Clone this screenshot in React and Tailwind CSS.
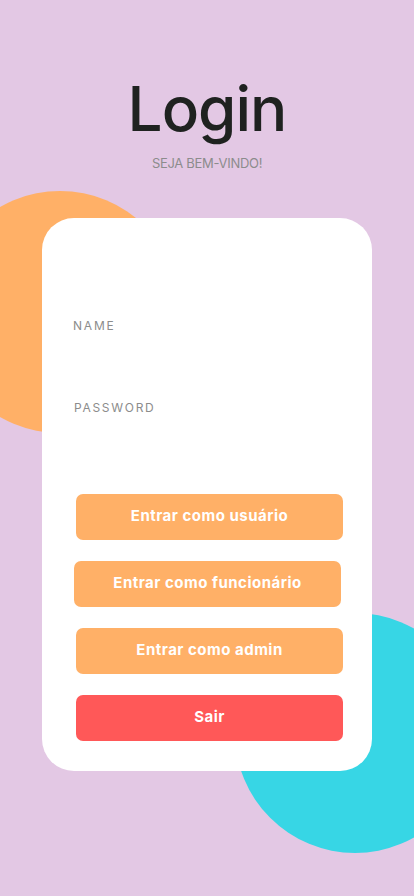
import { useState } from 'react';

const buttons = [
    { label: 'Entrar como usuário', cls: 'ml-[34px] mr-[29px] bg-[#ffb067]' },
    { label: 'Entrar como funcionário', cls: 'ml-[32px] mr-[31px] bg-[#ffb067]' },
    { label: 'Entrar como admin', cls: 'ml-[34px] mr-[29px] bg-[#ffb067]' },
    { label: 'Sair', cls: 'ml-[34px] mr-[29px] bg-[#ff5858]' },
];

const App = () => {
    const [name, setName] = useState('');
    const [password, setPassword] = useState('');

    return (
        <div className="relative min-h-[896px] w-full overflow-hidden bg-[#e3c8e4] font-['Inter',sans-serif]">
            {/* decorative circles */}
            <div className="absolute left-[-61px] top-[191px] h-[242px] w-[242px] rounded-full bg-[#ffb067]"></div>
            <div className="absolute left-[235px] top-[613px] h-[240px] w-[240px] rounded-full bg-[#37d6e5]"></div>

            <div className="relative flex flex-col items-center pt-[78px]">
                <h1 className="text-[62px] font-medium leading-none tracking-[-1px] text-[#1f2220]">Login</h1>
                <p className="mt-[14px] text-[13px] tracking-[-0.3px] text-[#8c8c8c]">SEJA BEM-VINDO!</p>
            </div>

            <div className="relative mx-[42px] mt-[44px] flex h-[553px] flex-col rounded-[32px] bg-white">
                <div className="flex flex-col px-[31px] pt-[99px]">
                    <label className="text-[12px] tracking-[1.8px] text-[#8c8c8c]">NAME</label>
                    <input
                        value={name}
                        onChange={(e) => setName(e.target.value)}
                        className="h-[40px] bg-transparent text-sm outline-none"
                    />
                    <label className="ml-[1px] mt-[24px] text-[12px] tracking-[1.7px] text-[#8c8c8c]">PASSWORD</label>
                    <input
                        type="password"
                        value={password}
                        onChange={(e) => setPassword(e.target.value)}
                        className="h-[40px] bg-transparent text-sm outline-none"
                    />
                </div>

                <div className="mt-[37px] flex flex-col gap-[21px]">
                    {buttons.map((b) => (
                        <button
                            key={b.label}
                            className={`flex h-[46px] items-center justify-center rounded-[7px] text-[15px] font-bold tracking-[0.5px] text-white ${b.cls}`}
                        >
                            {b.label}
                        </button>
                    ))}
                </div>
            </div>
        </div>
    );
};

export default App;
